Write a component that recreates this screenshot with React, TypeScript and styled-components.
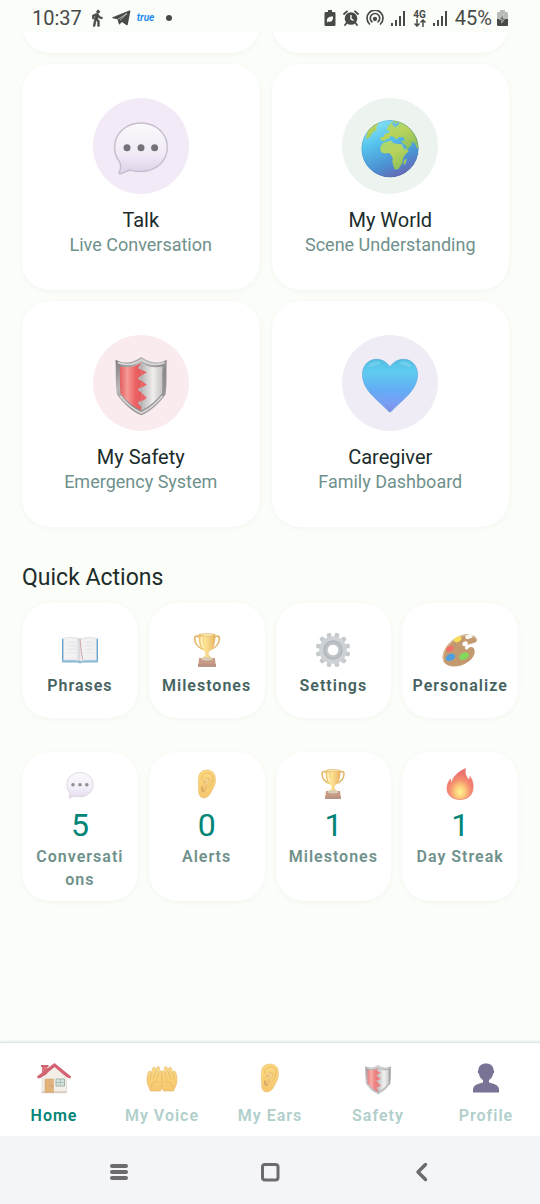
import React from "react";
import styled, { createGlobalStyle } from "styled-components";
import { MdDirectionsWalk } from "react-icons/md";

const GlobalStyle = createGlobalStyle`
  *, *::before, *::after { box-sizing: border-box; }
  body {
    margin: 0;
    background: #fbfdf8;
    font-family: Roboto, "Liberation Sans", sans-serif;
    color: #1b2c2b;
  }
  button { font: inherit; color: inherit; border: 0; padding: 0; cursor: pointer; }
  h2, p { margin: 0; font-weight: 400; }
`;

/* ---------- layout ---------- */

const Screen = styled.div`
  min-height: 100vh;
  display: flex;
  flex-direction: column;
`;

const StatusBar = styled.header`
  height: 32px;
  padding: 4px 32px 0;
  display: flex;
  align-items: center;
  justify-content: space-between;
  color: #484a48;
  font-size: 20px;
  line-height: 24px;
`;

const StatusGroup = styled.div<{ $gap: number }>`
  display: flex;
  align-items: center;
  gap: ${(p) => p.$gap}px;
  svg { display: block; }
`;

const WalkIcon = styled(MdDirectionsWalk)`
  path:last-child {
    stroke: currentColor;
    stroke-width: 1px;
  }
`;

const TrueBadge = styled.span`
  color: #1f8df0;
  font-size: 10px;
  font-style: italic;
  font-weight: 700;
  line-height: 12px;
`;

const Dot = styled.span`
  width: 6px;
  height: 6px;
  margin-left: 6px;
  border-radius: 50%;
  background: #484a48;
`;

const Network = styled.span`
  display: flex;
  flex-direction: column;
  align-items: center;
  font-size: 10px;
  font-weight: 700;
  line-height: 9px;
`;

const Battery = styled.span`
  display: flex;
  align-items: center;
  gap: 5px;
`;

const Content = styled.main`
  flex: 1;
  overflow: hidden;
  padding: 0 22px 24px;
`;

const FeatureGrid = styled.section`
  display: grid;
  grid-template-columns: 1fr 1fr;
  gap: 11px 12px;
  margin: -35px 9px 0 0;
`;

const Card = styled.div`
  background: #fff;
  border-radius: 28px;
  box-shadow: 0 1px 5px rgba(0, 110, 90, 0.05);
`;

const ScrolledCard = styled(Card)`
  height: 56px;
`;

const FeatureCard = styled(Card).attrs({ as: "button", type: "button" })`
  height: 226px;
  display: flex;
  flex-direction: column;
  align-items: center;
  justify-content: center;
`;

const IconCircle = styled.span<{ $tint: string }>`
  width: 96px;
  height: 96px;
  margin-bottom: 12px;
  border-radius: 50%;
  display: grid;
  place-items: center;
  background: ${(p) => p.$tint};
`;

const FeatureTitle = styled.span`
  font-size: 20px;
  line-height: 28px;
`;

const FeatureSubtitle = styled.span`
  font-size: 18px;
  line-height: 22px;
  color: #6f918c;
`;

const SectionTitle = styled.h2`
  margin-top: 36px;
  font-size: 23px;
  line-height: 30px;
`;

const TileRow = styled.section<{ $top: number }>`
  display: grid;
  grid-template-columns: repeat(4, minmax(0, 1fr));
  gap: 11px;
  margin-top: ${(p) => p.$top}px;
`;

const QuickCard = styled(Card).attrs({ as: "button", type: "button" })`
  height: 115px;
  padding-top: 8px;
  display: flex;
  flex-direction: column;
  align-items: center;
  justify-content: center;
  gap: 6px;
`;

const Label = styled.span<{ $tone: string }>`
  font-size: 16px;
  font-weight: 600;
  line-height: 23px;
  letter-spacing: 1px;
  text-align: center;
  color: ${(p) => p.$tone};
`;

const StatCard = styled(Card)`
  min-height: 149px;
  padding: 16px 11px 10px;
  display: flex;
  flex-direction: column;
  align-items: center;
`;

const StatValue = styled.strong`
  font-size: 32px;
  font-weight: 400;
  line-height: 38px;
  margin: 6px 0 1px;
  color: #008577;
`;

const StatLabel = styled(Label)`
  max-width: 100%;
  overflow-wrap: anywhere;
`;

const TabBar = styled.nav`
  height: 94px;
  display: grid;
  grid-template-columns: repeat(5, 1fr);
  background: #fff;
  border-top: 1px solid #d5e9e8;
  box-shadow: 0 -1px 2px rgba(0, 110, 110, 0.1);
`;

const Tab = styled.a`
  display: flex;
  flex-direction: column;
  align-items: center;
  justify-content: center;
  gap: 10px;
  padding-top: 10px;
  text-decoration: none;
`;

const SystemBar = styled.footer`
  height: 68px;
  padding: 4px 44px 0;
  display: grid;
  grid-template-columns: repeat(3, 1fr);
  place-items: center;
  background: #f4f5f7;
`;

const SystemButton = styled.button`
  width: 44px;
  height: 44px;
  display: grid;
  place-items: center;
  background: none;
`;

const Emoji = styled.svg<{ $fade: number }>`
  display: block;
  flex: none;
  overflow: visible;
  opacity: ${(p) => p.$fade};
`;

const DefsSvg = styled.svg`
  position: absolute;
  width: 0;
  height: 0;
`;

/* ---------- drawings, all on a 64 unit square ---------- */

const SharedGradients = () => (
  <DefsSvg aria-hidden="true">
    <defs>
      <linearGradient id="bubble" x1="0" y1="0" x2="0" y2="1">
        <stop offset="0" stopColor="#fbf9fc" />
        <stop offset="0.6" stopColor="#f1ebf6" />
        <stop offset="1" stopColor="#ddd1ea" />
      </linearGradient>
      <linearGradient id="ocean" x1="0.2" y1="0" x2="0.65" y2="1">
        <stop offset="0" stopColor="#8ce6f6" />
        <stop offset="0.35" stopColor="#56c3ee" />
        <stop offset="0.75" stopColor="#4b8fd0" />
        <stop offset="1" stopColor="#6a66b4" />
      </linearGradient>
      <linearGradient id="land" x1="0" y1="0" x2="0.6" y2="1">
        <stop offset="0" stopColor="#a3d977" />
        <stop offset="0.5" stopColor="#b9d35c" />
        <stop offset="1" stopColor="#8fc25c" />
      </linearGradient>
      <linearGradient id="heart" x1="0" y1="0" x2="0" y2="1">
        <stop offset="0" stopColor="#52bfe2" />
        <stop offset="0.25" stopColor="#5fcbf0" />
        <stop offset="0.6" stopColor="#64abf5" />
        <stop offset="0.85" stopColor="#7a9df3" />
        <stop offset="1" stopColor="#8288e6" />
      </linearGradient>
      <linearGradient id="steel" x1="0" y1="0" x2="1" y2="1">
        <stop offset="0" stopColor="#777577" />
        <stop offset="0.3" stopColor="#b9b7b8" />
        <stop offset="0.6" stopColor="#8a8889" />
        <stop offset="1" stopColor="#a9a7a8" />
      </linearGradient>
      <linearGradient id="shieldRed">
        <stop offset="0" stopColor="#e25d5f" />
        <stop offset="0.35" stopColor="#f59a96" />
        <stop offset="0.7" stopColor="#ed6465" />
        <stop offset="1" stopColor="#e5585b" />
      </linearGradient>
      <linearGradient id="shieldWhite">
        <stop offset="0" stopColor="#b8b6b6" />
        <stop offset="0.55" stopColor="#efeeed" />
        <stop offset="1" stopColor="#c4c2c2" />
      </linearGradient>
      <linearGradient id="gold">
        <stop offset="0" stopColor="#edb13f" />
        <stop offset="0.4" stopColor="#fbdd79" />
        <stop offset="1" stopColor="#e5a03a" />
      </linearGradient>
      <linearGradient id="skin" x1="0" y1="0" x2="0" y2="1">
        <stop offset="0" stopColor="#fbd160" />
        <stop offset="1" stopColor="#f4b94a" />
      </linearGradient>
      <radialGradient id="flame" cx="0.5" cy="0.75" r="0.6">
        <stop offset="0" stopColor="#fff177" />
        <stop offset="0.35" stopColor="#fcb95a" />
        <stop offset="0.65" stopColor="#f4744d" />
        <stop offset="1" stopColor="#e8504a" />
      </radialGradient>
      <linearGradient id="page">
        <stop offset="0" stopColor="#f4f4f4" />
        <stop offset="0.8" stopColor="#ededee" />
        <stop offset="1" stopColor="#cfcfd3" />
      </linearGradient>
      <clipPath id="globeClip"><circle cx="32" cy="34.7" r="28.7" /></clipPath>
    </defs>
  </DefsSvg>
);

const Bubble = () => (
  <>
    <path
      d="M32 9C17 9 5.600 19.600 5.600 33.300c0 6.300 2.200 11.300 5.400 15.300 1 3.500.700 7-.9 9.700-.6 1.100.4 1.900 1.500 1.500 3.400-.8 6-3 9-3.600 3.500 1 7.200 1.300 11.400 1.300 15 0 26.300-10.500 26.300-24.200S47 9 32 9z"
      fill="url(#bubble)"
      stroke="#c5bdcb"
      strokeWidth="1.400"
    />
    <g fill="#77727a">
      <circle cx="18" cy="33.700" r="3.500" />
      <circle cx="32" cy="33.700" r="3.500" />
      <circle cx="45.600" cy="33.700" r="3.500" />
    </g>
  </>
);

const Globe = () => (
  <g clipPath="url(#globeClip)">
    <circle cx="32" cy="34.700" r="28.700" fill="url(#ocean)" />
    <g fill="url(#land)">
      <path d="M8 24l2-8 6-6 5-1-3 5 1 2-4 2-3 5-3 2z" />
      <path d="M26.500 20l4-1 1-2-3-1.500 2-4 5-5 9 1 8 7 7 9 1.800 11-2.500-.5-2-5-3-1-.5 3.500-4.500 4-1-4-3.500-2.500-1-2 3.500-.5-1-3-5-.5-2 2.500-4-3-2.500-.5-1 2.500-3 .5-2 2-3.500-.5-.3-3.500 3.500-.3z" />
      <path d="M22.200 35.300l.5-3.500 3-3.200 6-1.800 2.500.3.500 2 5 1 4.500.2 2 4 4 1.500.2 1.500-4 4.500-1.500 3.500-.3 3.500-2.300 3.500-2 2.800-3.500.5-1.500-4-1-4 .5-3-2-4-2-1.600-4.500.5-3-1.200z" />
      <path d="M45.500 50l1-4 1.700-1.500.2 2.500-1.500 4z" />
    </g>
    <path d="M34 10l2-3 1.500 3 3-2.500.5 3-4 3zM44.500 30.500l3 5-1 .5-3-5z" fill="#69bde3" />
    <circle cx="32" cy="34.700" r="28.200" fill="none" stroke="#477eb4" strokeOpacity="0.350" />
  </g>
);

const Shield = () => (
  <>
    <path
      d="M6.500 8.700C16 13.500 24 12 32.300 6c8.400 6 16.400 7.500 25.500 2.700-.8 12 .6 23-1.300 35C48 55 40 61 32.300 64.300 24.500 61 16.500 55 8 43.700 6.100 31.700 7.300 20.700 6.500 8.700z"
      fill="url(#steel)"
    />
    <path
      d="M8.800 11.600C17 14.800 25 13.500 32.300 8.800c7.400 4.700 15.400 6 23.300 2.800M11.200 45c6.500 8 13.500 13.500 21.100 17 7.500-3.500 14.600-9 21.100-17"
      fill="none"
      stroke="#dcd9d9"
      strokeWidth="1.600"
    />
    <path d="M10.800 15.500c8 1.800 15 .6 21.500-3.400v47.500C24 55.500 17.400 50 11.500 42.500c-1-9-.2-18-.7-27z" fill="url(#shieldRed)" />
    <path d="M32.300 12.100c6.500 4 13.500 5.200 21.300 3.400-.5 9 .3 18-.7 27-6 7.500-12.400 13-20.600 17.100z" fill="url(#shieldWhite)" />
    <path d="M32.300 12.100l-3.400 4.900 3.400 2zM32.300 24l-3.600 3.700 3.600 2.300zM32.300 35.500l-3.600 3.200 3.600 2.800zM32.300 49l-3.600 3 3.600 4z" fill="#b8b6b6" />
    <path d="M32.300 18.500l5.500 2.800-5.500 3.400zM32.300 29.500l5.500 4.200-5.500 3zM32.300 41.500l5.500 5.500-5.500 3.500z" fill="#ec6264" />
  </>
);

const Heart = () => (
  <>
    <path
      d="M32 16C28.500 10.700 23.500 8.300 18.500 8.300 10.500 8.300 4.500 14.500 4.500 23.500c0 16.500 17 26.500 26 36.700.9 1 2.100 1 3 0 9-10.200 26-20.200 26-36.700 0-9-6-15.200-14-15.200-5 0-10 2.400-13.500 7.700z"
      fill="url(#heart)"
      stroke="#58a6de"
      strokeOpacity="0.700"
    />
    <path d="M10 16c2-5 8-7 13-4.500-2 2.500-8 4.500-13 4.500zM54 16c-2-5-8-7-13-4.500 2 2.500 8 4.500 13 4.500z" fill="#8ddcf3" fillOpacity="0.450" />
  </>
);

const Book = () => (
  <>
    <path d="M0 12h3v41H0zM61 12h3v41h-3z" fill="#3e8dc2" />
    <path d="M0 50h64v4H36l-4 2-4-2H0z" fill="#6aa7cd" />
    <path d="M3 11c10-2 20-2 28 1v39c-9-2-18-2-28-1z" fill="url(#page)" stroke="#c6c6cc" />
    <path d="M61 11c-10-2-18-2-26 1l-3 2v38c10-3 19-3 29-2z" fill="#eeeeef" stroke="#c6c6cc" />
    <path d="M8 19c6-1 12-1 18 0M8 25c6-1 12-1 18 0M8 31c6-1 12-1 18 0M8 37c6-1 12-1 18 0M41 19c6-1 11-1 15 0M41 25c6-1 11-1 15 0M41 31c6-1 11-1 15 0M41 37c6-1 11-1 15 0" stroke="#d2d2d7" fill="none" />
    <path d="M32 11c1 13 2 26 5 38" stroke="#c4989d" strokeWidth="2" fill="none" />
  </>
);

const Trophy = () => (
  <>
    <path
      d="M19 9c-5-3-9-2-9 2 0 9 6 17 16 20M45 9c5-3 9-2 9 2 0 9-6 17-16 20"
      fill="none"
      stroke="#dba544"
      strokeWidth="3"
      strokeLinecap="round"
    />
    <path d="M17 5h30c0 13-2 23-8 27-3 2-4 4-4 7s2 5 8 8H21c6-3 8-5 8-8s-1-5-4-7C19 28 17 18 17 5z" fill="url(#gold)" />
    <ellipse cx="32" cy="5" rx="15" ry="3" fill="#e0ad50" />
    <ellipse cx="32" cy="5" rx="12" ry="1.500" fill="#f7e0a0" />
    <path d="M18 46h28l2 16H16z" fill="#b98266" />
    <path d="M21 48c3-5 19-5 22 0-2 4-20 4-22 0z" fill="#cfc3a6" />
    <path d="M16 57h32v5H16z" fill="#a87a64" />
    <path d="M22 9c0 9 1 15 4 19" stroke="#fff2b8" strokeWidth="3" fill="none" />
  </>
);

const Gear = () => (
  <>
    <g fill="#b7bdc1">
      {[0, 30, 60, 90, 120, 150].map((angle) => (
        <rect key={angle} x="28" y="1" width="8" height="62" rx="2.500" transform={`rotate(${angle + 15} 32 32)`} />
      ))}
    </g>
    <circle cx="32" cy="32" r="24.500" fill="#c3c8cc" />
    <circle cx="32" cy="32" r="17.500" fill="#a0a7ad" />
    <circle cx="32" cy="32" r="14" fill="#b0b6bb" />
    <circle cx="32" cy="32" r="9.500" fill="#fff" />
  </>
);

const Palette = () => (
  <>
    <path
      d="M62 14C58 1 37 0 19 14 3 26-3 45 4 54c8 11 30 9 44-2 9-7 12-16 9-22-2-5-9-4-11 0-3 3-7-1-4-5 4-5 21-4 20-11z"
      fill="#b5824c"
    />
    <path d="M62 14C58 3 37 2 20 15 5 27-1 43 4 51" fill="none" stroke="#d6b083" strokeWidth="2" />
    <ellipse cx="41" cy="21" rx="5" ry="4" fill="#fff" transform="rotate(-30 41 21)" />
    <ellipse cx="48" cy="8" rx="7" ry="4" fill="#f5f5ee" transform="rotate(-20 48 8)" />
    <ellipse cx="28" cy="13" rx="7" ry="4.500" fill="#f6d72f" transform="rotate(-30 28 13)" />
    <ellipse cx="14" cy="30" rx="7" ry="5" fill="#ee4b45" transform="rotate(-25 14 30)" />
    <ellipse cx="15" cy="45" rx="9" ry="6" fill="#2288d8" transform="rotate(-25 15 45)" />
    <ellipse cx="39" cy="43" rx="9" ry="6" fill="#62cf33" transform="rotate(-25 39 43)" />
  </>
);

const Ear = () => (
  <>
    <path
      d="M15 20C15 9 23 4 32 4c11 0 17 7 17 19 0 10-3 15-7 22-3 7-8 15-16 15-8 0-11-7-11-16 0-8-1-15 0-24z"
      fill="url(#skin)"
      stroke="#dfab50"
      strokeWidth="1"
    />
    <path d="M21 23c0-9 5-13 12-13 8 0 12 6 11 14-1 6-4 10-8 14" fill="none" stroke="#e0a748" strokeWidth="2" strokeLinecap="round" />
    <path d="M23 27c3-7 11-10 15-5 4 6-4 9-6 13-1 4 2 5-1 9-2 3-7 3-8-1 0-4 5-4 4-8-1-3-3-4-4-8z" fill="#e8b153" />
    <path d="M27 25c4-4 9-1 7 3-2 3-5 3-6 6" fill="none" stroke="#f9d57d" strokeWidth="2.500" />
    <path d="M22 38c-1 5 0 9 4 8" fill="none" stroke="#c98b3a" strokeWidth="3" strokeLinecap="round" />
  </>
);

const Flame = () => (
  <path
    d="M43 1c-2 12 2 16 7 23 1-2 2-4 2-7 5 7 7 15 6 24-1 13-11 22-26 22S6 54 6 41c0-8 3-14 7-19 0 4 1 6 3 7 2-13 14-22 27-28z"
    fill="url(#flame)"
    stroke="#e55d4e"
    strokeWidth="1.500"
  />
);

const House = () => (
  <>
    <path d="M8 7h11v20H8z" fill="#d5525d" />
    <path d="M8 33L34 8l23 25v29H8z" fill="#f1ebe1" stroke="#c9beb4" />
    <path d="M7 58h51v4H7z" fill="#d6c8b8" />
    <path d="M33 2L-2 29l2 4 7-2L33 10l25 21 7 2 1-4z" fill="#c93c4f" />
    <path d="M6 6h15v4H6z" fill="#bb4250" />
    <path d="M14 34h17v27H14z" fill="#dca05b" stroke="#bf884c" />
    <path d="M36 34h17v14H36z" fill="#cddfd8" stroke="#87a198" strokeWidth="2" />
    <path d="M44.500 34v14M36 41h17" stroke="#87a198" strokeWidth="1.500" />
    <circle cx="27" cy="48" r="1.500" fill="#9f713f" />
  </>
);

const HAND =
  "M29 58H9C7 52 2 45 2 37c0-6 1-13 3-17 1-3 5-2 5 1l-1 9 4-17c1-4 6-3 6 1l-2 14 5-17c1-4 6-2 5 2l-3 16 3-9c1-4 5-3 5 1v17c1 8 0 15-3 20z";

const Hands = () => (
  <>
    {["", "translate(64 0) scale(-1 1)"].map((transform) => (
      <g key={transform} transform={transform}>
        <path d={HAND} fill="url(#skin)" stroke="#dfa94c" strokeWidth="1.300" strokeLinejoin="round" />
        <path d="M8 30v5M16 28l-2 6M23 29l-2 5M11 51c0-8 5-12 14-12" fill="none" stroke="#d9a048" strokeWidth="1.400" />
      </g>
    ))}
  </>
);

const Person = () => (
  <path
    d="M32 3c9 0 15 5 15 13 2 1 2 6-1 8-1 6-4 10-8 12v5c9 2 20 5 20 14v6H6v-6c0-9 11-12 20-14v-5c-4-2-7-6-8-12-3-2-3-7-1-8C17 8 23 3 32 3z"
    fill="#58527b"
  />
);

const EMOJI = {
  bubble: Bubble,
  globe: Globe,
  shield: Shield,
  heart: Heart,
  book: Book,
  trophy: Trophy,
  gear: Gear,
  palette: Palette,
  ear: Ear,
  flame: Flame,
  house: House,
  hands: Hands,
  person: Person,
};

type EmojiName = keyof typeof EMOJI;

const EmojiIcon = ({ name, size, fade = 1 }: { name: EmojiName; size: number; fade?: number }) => {
  const Drawing = EMOJI[name];
  return (
    <Emoji $fade={fade} width={size} height={size} viewBox="0 0 64 64" aria-hidden="true">
      <Drawing />
    </Emoji>
  );
};

/* ---------- status bar icons ---------- */

const PlaneIcon = () => (
  <svg width="19" height="16" viewBox="0 0 19 16" aria-hidden="true">
    <path d="M.6 7.200L17.300.500c.7-.3 1.200.1 1 .9l-2.500 13c-.2.9-.8 1.100-1.500.6L10 12l-2.300 2.300c-.4.3-.8.2-.9-.3L5.500 9.300.7 8.200c-.6-.2-.6-.7-.1-1z" fill="#484a48" />
    <path d="M6 9.200l9-5.700-7 6.700" fill="none" stroke="#fbfdf8" strokeWidth="0.600" />
  </svg>
);

const SaverIcon = () => (
  <svg width="12" height="16" viewBox="0 0 12 16" fill="#484a48" aria-hidden="true">
    <path d="M4 0h4v2h2c1 0 1.500.5 1.500 1.500v11c0 1-.5 1.500-1.500 1.500H2c-1 0-1.500-.5-1.500-1.500v-11C.5 2.500 1 2 2 2h2z" />
    <path d="M3 11.500c-.5-3.500 1.500-5 6-5 .3 4-1.500 6-4.500 5l-1 1z" fill="#fbfdf8" />
  </svg>
);

const AlarmIcon = () => (
  <svg width="16" height="16" viewBox="0 0 16 16" aria-hidden="true">
    <circle cx="8" cy="8.500" r="6.300" fill="#484a48" />
    <path d="M1 4l3-2.700M15 4l-3-2.700M3.500 13L2 15M12.500 13l1.500 2" stroke="#484a48" strokeWidth="1.800" strokeLinecap="round" />
    <path d="M8 5v4l2.500 1.300" stroke="#fbfdf8" strokeWidth="1.400" fill="none" />
  </svg>
);

const HotspotIcon = () => (
  <svg width="18" height="16" viewBox="0 0 18 16" fill="none" stroke="#484a48" strokeWidth="1.700" strokeLinecap="round" aria-hidden="true">
    <path d="M3.500 14A8 8 0 1 1 14.500 14M6 11.800a4.700 4.700 0 1 1 6 0" />
    <circle cx="9" cy="9" r="1.300" fill="#484a48" />
  </svg>
);

const SignalIcon = () => (
  <svg width="15" height="16" viewBox="0 0 15 16" fill="#484a48" aria-hidden="true">
    <path d="M0 13h2v3H0zM4 10h2v6H4zM8 6h2v10H8zM12 1h2v15h-2z" />
  </svg>
);

const DataArrows = () => (
  <svg width="12" height="8" viewBox="0 0 12 8" fill="none" stroke="#484a48" strokeWidth="1.500" aria-hidden="true">
    <path d="M3 0v7M.5 4.500L3 7l2.500-2.500M9 8V1M6.500 3.500L9 1l2.500 2.500" />
  </svg>
);

const BatteryIcon = () => (
  <svg width="11" height="16" viewBox="0 0 11 16" aria-hidden="true">
    <path d="M3 0h5v2h1.500C10.500 2 11 2.500 11 3.500V9H0V3.500C0 2.500.5 2 1.500 2H3z" fill="#b9bbb9" />
    <path d="M0 9h11v5.500c0 1-.5 1.500-1.500 1.500h-8C.5 16 0 15.500 0 14.500z" fill="#484a48" />
    <path d="M6 4L2.500 9.500H5L4.500 13 8.500 8H6z" fill="#6b6d6b" stroke="#dcdedb" strokeWidth="0.600" />
  </svg>
);

/* ---------- data ---------- */

const features: { title: string; subtitle: string; icon: EmojiName; tint: string }[] = [
  { title: "Talk", subtitle: "Live Conversation", icon: "bubble", tint: "#f2eaf6" },
  { title: "My World", subtitle: "Scene Understanding", icon: "globe", tint: "#edf4ef" },
  { title: "My Safety", subtitle: "Emergency System", icon: "shield", tint: "#faecee" },
  { title: "Caregiver", subtitle: "Family Dashboard", icon: "heart", tint: "#f0ecf6" },
];

const quickActions: { label: string; icon: EmojiName }[] = [
  { label: "Phrases", icon: "book" },
  { label: "Milestones", icon: "trophy" },
  { label: "Settings", icon: "gear" },
  { label: "Personalize", icon: "palette" },
];

const stats: { label: string; value: number; icon: EmojiName }[] = [
  { label: "Conversations", value: 5, icon: "bubble" },
  { label: "Alerts", value: 0, icon: "ear" },
  { label: "Milestones", value: 1, icon: "trophy" },
  { label: "Day Streak", value: 1, icon: "flame" },
];

const tabs: { label: string; icon: EmojiName }[] = [
  { label: "Home", icon: "house" },
  { label: "My Voice", icon: "hands" },
  { label: "My Ears", icon: "ear" },
  { label: "Safety", icon: "shield" },
  { label: "Profile", icon: "person" },
];

export default function App() {
  return (
    <Screen>
      <GlobalStyle />
      <SharedGradients />
      <StatusBar>
        <StatusGroup $gap={6}>
          <span>10:37</span>
          <WalkIcon size={18} />
          <PlaneIcon />
          <TrueBadge>true</TrueBadge>
          <Dot />
        </StatusGroup>
        <StatusGroup $gap={7}>
          <SaverIcon />
          <AlarmIcon />
          <HotspotIcon />
          <SignalIcon />
          <Network>
            4G
            <DataArrows />
          </Network>
          <SignalIcon />
          <Battery>
            45%
            <BatteryIcon />
          </Battery>
        </StatusGroup>
      </StatusBar>

      <Content>
        <FeatureGrid>
          <ScrolledCard />
          <ScrolledCard />
          {features.map((feature) => (
            <FeatureCard key={feature.title}>
              <IconCircle $tint={feature.tint}>
                <EmojiIcon name={feature.icon} size={64} />
              </IconCircle>
              <FeatureTitle>{feature.title}</FeatureTitle>
              <FeatureSubtitle>{feature.subtitle}</FeatureSubtitle>
            </FeatureCard>
          ))}
        </FeatureGrid>

        <SectionTitle>Quick Actions</SectionTitle>
        <TileRow $top={10}>
          {quickActions.map((action) => (
            <QuickCard key={action.label}>
              <EmojiIcon name={action.icon} size={36} fade={0.8} />
              <Label $tone="#45635f">{action.label}</Label>
            </QuickCard>
          ))}
        </TileRow>

        <TileRow $top={34}>
          {stats.map((stat) => (
            <StatCard key={stat.label}>
              <EmojiIcon name={stat.icon} size={32} fade={0.8} />
              <StatValue>{stat.value}</StatValue>
              <StatLabel $tone="#6f918c">{stat.label}</StatLabel>
            </StatCard>
          ))}
        </TileRow>
      </Content>

      <TabBar>
        {tabs.map((tab, index) => (
          <Tab key={tab.label} href="#" aria-current={index === 0 ? "page" : undefined}>
            <EmojiIcon name={tab.icon} size={32} fade={0.8} />
            <Label $tone={index === 0 ? "#008577" : "#b1cfcb"}>{tab.label}</Label>
          </Tab>
        ))}
      </TabBar>

      <SystemBar>
        <SystemButton type="button" aria-label="Recent apps">
          <svg width="20" height="20" viewBox="0 0 20 20" stroke="#6c6c6e" strokeWidth="4" strokeLinecap="round">
            <path d="M3 4h14M3 10h14M3 16h14" />
          </svg>
        </SystemButton>
        <SystemButton type="button" aria-label="Home screen">
          <svg width="20" height="20" viewBox="0 0 20 20" fill="none" stroke="#6c6c6e" strokeWidth="3">
            <rect x="2.500" y="2.500" width="15.500" height="15.500" rx="2.500" />
          </svg>
        </SystemButton>
        <SystemButton type="button" aria-label="Back">
          <svg width="20" height="20" viewBox="0 0 20 20" fill="none" stroke="#6c6c6e" strokeWidth="3.500" strokeLinecap="round" strokeLinejoin="round">
            <path d="M14.500 2.500L7 10l7.500 7.500" />
          </svg>
        </SystemButton>
      </SystemBar>
    </Screen>
  );
}
